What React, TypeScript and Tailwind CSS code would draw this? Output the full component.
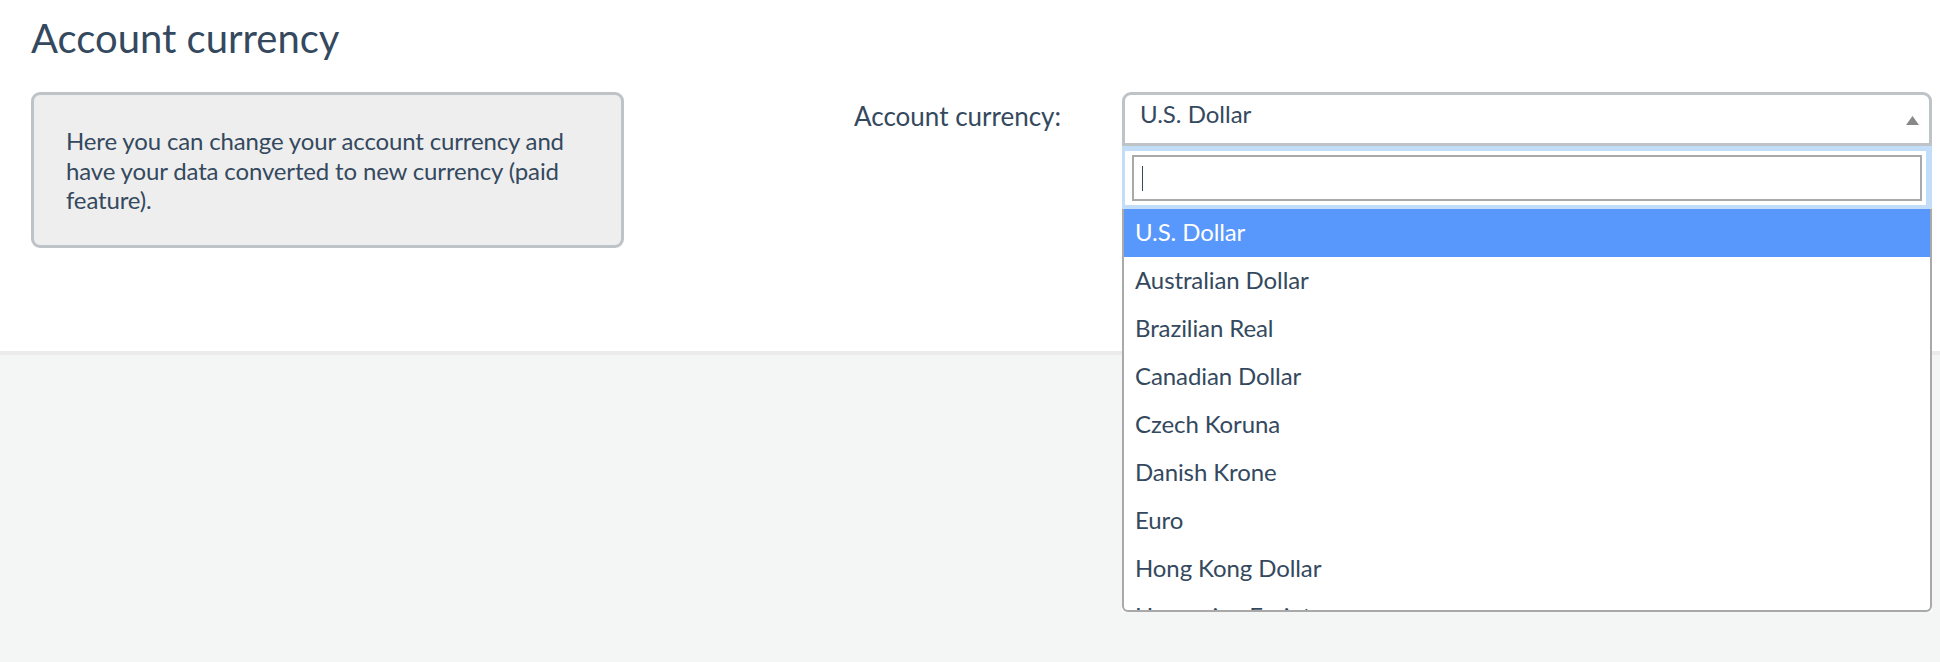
import React from 'react'

const currencies = [
    'U.S. Dollar',
    'Australian Dollar',
    'Brazilian Real',
    'Canadian Dollar',
    'Czech Koruna',
    'Danish Krone',
    'Euro',
    'Hong Kong Dollar',
    'Hungarian Forint',
    'Indian Rupee',
    'Israeli New Sheqel',
]

export default function App() {
    return (
        <div className="min-h-screen flex flex-col bg-[#f4f6f5] font-['Lato',sans-serif] text-[#34495e]">
            <section className="h-[355px] bg-white border-b-4 border-[#ebebeb] pl-[31px] pr-[8px] pt-[14px]">
                <h1 className="text-[40px] leading-[48px]">Account currency</h1>

                <div className="mt-[30px] flex items-start">
                    {/* Info box */}
                    <div className="w-[593px] rounded-[9px] border-[3px] border-[#bdc3c7] bg-[#eeeeee] px-[32px] pt-[31px] pb-[30px] text-[24px] leading-[29.5px] tracking-[-0.15px]">
                        Here you can change your account currency and have your data converted to new currency (paid feature).
                    </div>

                    <label className="ml-[230px] w-[268px] mt-[8px] text-[26px] leading-[32px]">Account currency:</label>

                    {/* Select */}
                    <div className="relative flex-1">
                        <div className="h-[54px] flex items-start justify-between rounded-t-[9px] border-[3px] border-[#bdc3c7] bg-white pl-[15px] pr-[10px]">
                            <span className="pt-[4px] text-[24px] leading-[29px]">U.S. Dollar</span>
                            <svg className="mt-[21px]" width="13" height="9" viewBox="0 0 13 9">
                                <polygon points="6.5,0 13,9 0,9" fill="#888888" />
                            </svg>
                        </div>

                        {/* Dropdown */}
                        <div className="absolute left-0 right-0 top-full z-10 bg-white">
                            <div className="border-t-[5px] border-b-[4px] border-l-[3px] border-r-[6px] border-[#c2ddf8] pl-[7px] pr-[4px] py-[4px]">
                                <div className="h-[46px] flex items-center border-2 border-[#a9a9a9] pl-[8px]">
                                    <span className="w-px h-[25px] bg-[#34495e]" />
                                </div>
                            </div>
                            <ul className="h-[403px] overflow-hidden rounded-b-[6px] border-x-2 border-b-2 border-[#a9a9a9]">
                                {currencies.map((c, i) => (
                                    <li
                                        key={c}
                                        className={
                                            i === 0
                                                ? 'h-[48px] pl-[11px] text-[24px] leading-[45px] tracking-[-0.1px] bg-[#5897fb] text-white'
                                                : 'h-[48px] pl-[11px] text-[24px] leading-[45px] tracking-[-0.1px]'
                                        }
                                    >
                                        {c}
                                    </li>
                                ))}
                            </ul>
                        </div>
                    </div>
                </div>
            </section>

            <div className="flex-1" />
        </div>
    )
}
